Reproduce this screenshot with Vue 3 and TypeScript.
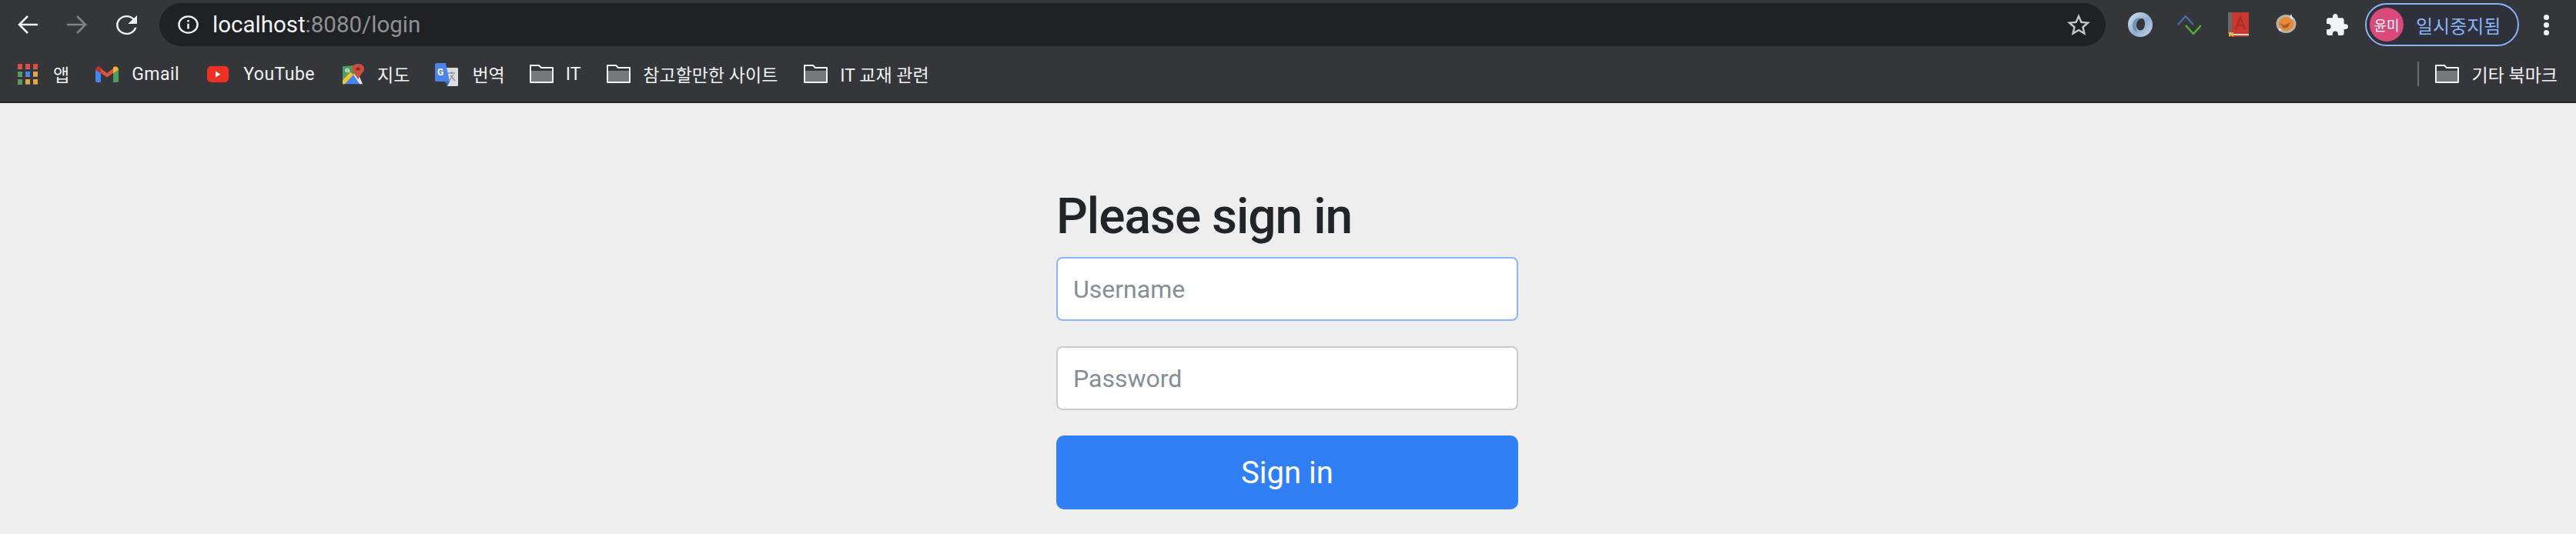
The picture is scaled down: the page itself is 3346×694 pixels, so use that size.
<script setup lang="ts">
import { ref } from 'vue'

const username = ref('')
const password = ref('')

const folders = ['IT', '참고할만한 사이트', 'IT 교재 관련']
const appColors = ['#e8453c', '#e8453c', '#e8453c', '#4f9d5d', '#4285f4', '#e9a73a', '#4f9d5d', '#e9a73a', '#e9a73a']
</script>

<template>
  <div class="page">
    <header class="browser">
      <div class="toolbar">
        <svg class="nav" viewBox="0 0 26 24" fill="none" stroke="#f1f3f4" stroke-width="2.600">
          <path d="M26 12H3M13 1 2 12l11 11" />
        </svg>
        <svg class="nav" viewBox="0 0 26 24" fill="none" stroke="#808285" stroke-width="2.600">
          <path d="M0 12h23M13 1l11 11-11 11" />
        </svg>
        <svg class="reload" viewBox="4 4 16 16" preserveAspectRatio="none" fill="#f1f3f4">
          <path d="M17.650 6.350C16.200 4.900 14.210 4 12 4c-4.420 0-7.990 3.580-7.990 8s3.570 8 7.990 8c3.730 0 6.840-2.550 7.730-6h-1.600c-.82 2.600-3.250 4.500-6.130 4.500-3.590 0-6.500-2.910-6.500-6.500S8.410 5.500 12 5.500c1.800 0 3.400.75 4.600 1.900L13 11h7V4l-2.350 2.350z" />
        </svg>

        <div class="omnibox">
          <svg class="info" viewBox="0 0 28 28" preserveAspectRatio="none" fill="none" stroke="#f1f3f4" stroke-width="2.600">
            <circle cx="14" cy="14" r="12.500" />
            <path d="M14 12.500v8M14 7v3" />
          </svg>
          <span class="url">localhost<span class="url-dim">:8080/login</span></span>
          <svg class="star" viewBox="2 2 20 19" preserveAspectRatio="none" fill="#c4c7c5">
            <path d="M22 9.240l-7.190-.62L12 2 9.190 8.630 2 9.240l5.460 4.730L5.820 21 12 17.270 18.180 21l-1.630-7.030L22 9.240zM12 15.400l-3.760 2.270 1-4.280-3.320-2.880 4.380-.38L12 6.100l1.710 4.040 4.380.38-3.320 2.880 1 4.280L12 15.400z" />
          </svg>
        </div>

        <div class="extensions">
          <svg class="ext-ring" viewBox="0 0 32 32">
            <defs>
              <linearGradient id="ring" x1="0" y1="0" x2="1" y2="1">
                <stop offset="0" stop-color="#d7e3ee" />
                <stop offset="0.550" stop-color="#8fb0d0" />
                <stop offset="1" stop-color="#c8d8e8" />
              </linearGradient>
            </defs>
            <path fill-rule="evenodd" fill="url(#ring)" d="M16 0c9 0 16 7 16 16s-7 16-16 16S0 25 0 16 7 0 16 0zm2 8c-4 0-7 4-7 8.500 0 4 2 7 5 7 4 0 6-4 6-8.500 0-4-1-7-4-7z" />
            <path d="M11 16.500C11 12 14 8 18 8c-5-3-11 1-12 8-.5 5 2 9 6 10-1-3-1-6-1-9.500z" fill="#6f93b8" />
          </svg>
          <svg class="ext-wave" viewBox="0 0 31 27" fill="none" stroke-width="2.500">
            <path d="M1 13 11 2l10 11" stroke="#44709f" />
            <path d="M11 14l10 11 10-11" stroke="#57b233" />
          </svg>
          <svg class="ext-book" viewBox="0 0 27 32">
            <path d="M0 0h5v28H0z" fill="#6a6a6a" />
            <path d="M5 0h22v28H5z" fill="#c9392f" />
            <path d="M3 28h24v3H3z" fill="#d6d6d6" />
            <path d="M3 30h24v2H3z" fill="#a8352d" />
            <path d="M10 22 16 6l6 16M12 17h8" fill="none" stroke="#a92f28" stroke-width="2.400" />
            <path d="M1 26h6v6l-3-2-3 2z" fill="#e6b93c" />
          </svg>
          <svg class="ext-fox" viewBox="0 0 27 25">
            <ellipse cx="13.500" cy="13" rx="13" ry="12" fill="#b8b2a8" />
            <ellipse cx="13.500" cy="13" rx="10" ry="9" fill="#e58a3b" />
            <path d="M5 12l6 3 8-4-3 6-5 2z" fill="#a85a22" />
            <path d="M20 0l3 8-5-3zM3 19l5 1-3 3z" fill="#e3e3e3" />
          </svg>
          <svg class="puzzle" viewBox="2 1 21 21" preserveAspectRatio="none" fill="#f1f3f4">
            <path d="M20.500 11H19V7c0-1.100-.9-2-2-2h-4V3.500C13 2.120 11.880 1 10.500 1S8 2.120 8 3.500V5H4c-1.100 0-1.990.9-1.990 2v3.800H3.500c1.490 0 2.700 1.210 2.700 2.700s-1.210 2.700-2.700 2.700H2V20c0 1.100.9 2 2 2h3.800v-1.500c0-1.490 1.210-2.700 2.700-2.700 1.490 0 2.700 1.210 2.700 2.700V22H17c1.100 0 2-.9 2-2v-4h1.500c1.380 0 2.500-1.120 2.500-2.500S21.880 11 20.500 11z" />
          </svg>
        </div>

        <div class="profile">
          <span class="avatar">윤미</span>
          <span class="paused">일시중지됨</span>
        </div>
        <div class="menu"><i></i><i></i><i></i></div>
      </div>

      <nav class="bookmarks">
        <a class="mark mark-apps">
          <span class="apps"><i v-for="(c, i) in appColors" :key="i" :style="{ background: c }"></i></span>
          앱
        </a>
        <a class="mark mark-latin">
          <svg class="mark-gmail" viewBox="0 0 30 21">
            <path d="M0 5v14c0 1 .8 2 2 2h5V8z" fill="#4285f4" />
            <path d="M23 8v13h5c1.200 0 2-1 2-2V5z" fill="#4f9d5d" />
            <path d="M0 4l7 5 8 5.500L23 9l7-5-3-4-12 9L3 0z" fill="#dd5044" />
            <path d="M0 5c0-4 4-6 7-3.500V9z" fill="#b5352c" />
            <path d="M30 5c0-4-4-6-7-3.500V9z" fill="#eab33c" />
          </svg>
          Gmail
        </a>
        <a class="mark mark-latin">
          <svg class="mark-youtube" viewBox="0 0 28 21">
            <rect width="28" height="21" rx="5" fill="#ee3024" />
            <path d="M11 6.500v8l6.500-4z" fill="#fff" />
          </svg>
          YouTube
        </a>
        <a class="mark mark-map">
          <svg class="mark-maps" viewBox="0 0 28 33" preserveAspectRatio="none">
            <path d="M0 4 18 2v28L0 32z" fill="#4f9d5d" />
            <path d="M3 32l11-15 8 15z" fill="#4285f4" />
            <path d="M0 32v-6l10-13 4 4L3 32z" fill="#f0c53b" />
            <path d="M14 17l5-5 7 20h-4z" fill="#e8e8e8" />
            <path d="M20 0c5 0 8 3.500 8 8 0 5-5 9-8 17-3-8-8-12-8-17 0-4.500 3-8 8-8z" fill="#c8503f" />
            <circle cx="20" cy="8" r="2.800" fill="#8f2f24" />
            <text x="3" y="13" class="map-letter">G</text>
          </svg>
          지도
        </a>
        <a class="mark mark-trans">
          <svg class="mark-translate" viewBox="0 0 30 30">
            <path d="M12 6h17a1 1 0 0 1 1 1v22a1 1 0 0 1-1 1H16z" fill="#dadce0" />
            <path d="M17 13h9M21.500 11v3M18 24l6-9M20 16l6 7" fill="none" stroke="#8d9096" stroke-width="1.300" />
            <path d="M2 0h12l5 24H2a2 2 0 0 1-2-2V2a2 2 0 0 1 2-2z" fill="#4d84e8" />
            <path d="M13 24h6l-3 6z" fill="#3a63b0" />
            <text x="3" y="16" class="g-letter">G</text>
          </svg>
          번역
        </a>
        <a v-for="name in folders" :key="name" class="mark">
          <svg class="folder" viewBox="0 0 31 24">
            <path d="M1 1h11l3 3h15v19H1z" fill="#35363a" stroke="#f1f3f4" stroke-width="2" stroke-linejoin="round" />
            <path d="M2 8h27v14H2z" fill="#77787b" />
          </svg>
          {{ name }}
        </a>
        <span class="divider"></span>
        <a class="mark mark-other">
          <svg class="folder" viewBox="0 0 31 24">
            <path d="M1 1h11l3 3h15v19H1z" fill="#35363a" stroke="#f1f3f4" stroke-width="2" stroke-linejoin="round" />
            <path d="M2 8h27v14H2z" fill="#77787b" />
          </svg>
          기타 북마크
        </a>
      </nav>
    </header>

    <main class="content">
      <form class="signin" @submit.prevent>
        <h2 class="title">Please sign in</h2>
        <input v-model="username" class="field field-focus" type="text" placeholder="Username" />
        <input v-model="password" class="field" type="password" placeholder="Password" />
        <button class="submit" type="submit">Sign in</button>
      </form>
    </main>
  </div>
</template>

<style>
html,
body {
  margin: 0;
  background: #eeeeee;
}
</style>

<style scoped>
.page {
  width: 3346px;
  height: 694px;
  overflow: hidden;
  display: flex;
  flex-direction: column;
  background: #eeeeee;
  font-family: Roboto, "Noto Sans CJK KR", "Liberation Sans", sans-serif;
}

.browser {
  background: #35363a;
  border-bottom: 2px solid #26272a;
  color: #f1f3f4;
}

.toolbar {
  height: 60px;
  box-sizing: border-box;
  padding: 4px 0 0 23px;
  display: flex;
  align-items: center;
}

.nav {
  width: 26px;
  height: 24px;
  margin-right: 38px;
}

.reload {
  width: 27px;
  height: 25px;
  margin-right: 29px;
}

.omnibox {
  width: 2528px;
  height: 56px;
  box-sizing: border-box;
  padding: 0 20px 0 24px;
  display: flex;
  align-items: center;
  background: #202124;
  border-radius: 28px;
}

.info {
  width: 27px;
  height: 24px;
  margin-right: 18px;
}

.url {
  font-size: 29.500px;
  flex: 1;
  white-space: nowrap;
}

.url-dim {
  color: #8e9094;
}

.star {
  width: 30px;
  height: 28px;
}

.extensions {
  margin-left: 29px;
  display: flex;
  align-items: center;
}

.ext-ring {
  width: 32px;
  height: 32px;
  margin-right: 32px;
}

.ext-wave {
  width: 31px;
  height: 27px;
  margin-right: 35px;
}

.ext-book {
  width: 27px;
  height: 32px;
  margin-right: 35px;
}

.ext-fox {
  width: 27px;
  height: 25px;
  margin-right: 39px;
  margin-bottom: 4px;
}

.puzzle {
  width: 28px;
  height: 28px;
}

.profile {
  margin-left: 22px;
  width: 200px;
  height: 56px;
  box-sizing: border-box;
  padding-left: 4px;
  display: flex;
  align-items: center;
  gap: 16px;
  border: 2px solid #8ab4f8;
  border-radius: 28px;
  background: #2e313b;
}

.avatar {
  flex: none;
  width: 44px;
  height: 44px;
  border-radius: 50%;
  background: #d94a7a;
  color: #fff;
  font-size: 18px;
  display: flex;
  align-items: center;
  justify-content: center;
  white-space: nowrap;
}

.paused {
  color: #8ab4f8;
  font-size: 24px;
  white-space: nowrap;
}

.menu {
  margin-left: 32px;
  display: flex;
  flex-direction: column;
  gap: 3px;
}

.menu i {
  display: block;
  width: 7px;
  height: 7px;
  border-radius: 50%;
  background: #f1f3f4;
}

.bookmarks {
  height: 72px;
  padding: 0 24px 0 23px;
  display: flex;
  align-items: center;
  font-size: 23px;
}

.mark {
  display: flex;
  align-items: center;
  white-space: nowrap;
  margin-right: 34px;
}

.mark-latin {
  margin-right: 36px;
  letter-spacing: 0.500px;
}

.mark-map {
  margin-right: 33px;
}

.mark-trans {
  margin-right: 32px;
}

.apps {
  width: 26px;
  height: 27px;
  margin-right: 20px;
  display: grid;
  grid-template-columns: repeat(3, 6px);
  grid-auto-rows: 7px;
  justify-content: space-between;
  align-content: space-between;
}

.apps i {
  display: block;
  border-bottom: 1px solid #8a8a8a;
}

.mark-gmail {
  width: 30px;
  height: 21px;
  margin-right: 17px;
}

.mark-youtube {
  width: 28px;
  height: 21px;
  margin-right: 19px;
}

.mark-maps {
  width: 28px;
  height: 27px;
  margin-right: 17px;
}

.mark-translate {
  width: 30px;
  height: 30px;
  margin-right: 18px;
  margin-top: 1px;
}

.g-letter {
  font-size: 12px;
  font-weight: 700;
  fill: #fff;
}

.map-letter {
  font-size: 9px;
  font-weight: 700;
  fill: #fff;
}

.folder {
  width: 31px;
  height: 24px;
  margin-right: 16px;
}

.divider {
  width: 2px;
  height: 32px;
  margin-left: auto;
  margin-right: 21px;
  background: #6b6c70;
}

.mark-other {
  margin-right: 0;
}

.content {
  flex: 1;
  display: flex;
  justify-content: center;
}

.signin {
  width: 600px;
  margin-right: 2px;
  padding-top: 110px;
  display: flex;
  flex-direction: column;
}

.title {
  margin: 0 0 14px;
  font-size: 64px;
  font-weight: 500;
  line-height: 76px;
  letter-spacing: -1px;
  color: #212529;
}

.field {
  flex: none;
  height: 83px;
  box-sizing: border-box;
  padding: 0 20px;
  margin-bottom: 33px;
  font-family: inherit;
  font-size: 32px;
  color: #212529;
  background: #fff;
  border: 2px solid #cccccc;
  border-radius: 8px;
  outline: none;
}

.field::placeholder {
  color: #868e96;
  opacity: 1;
}

.field-focus {
  border-color: #86b7fe;
}

.submit {
  flex: none;
  height: 96px;
  border: 0;
  border-radius: 10px;
  background: #317ff5;
  color: #fff;
  font-family: inherit;
  font-size: 40px;
}
</style>
